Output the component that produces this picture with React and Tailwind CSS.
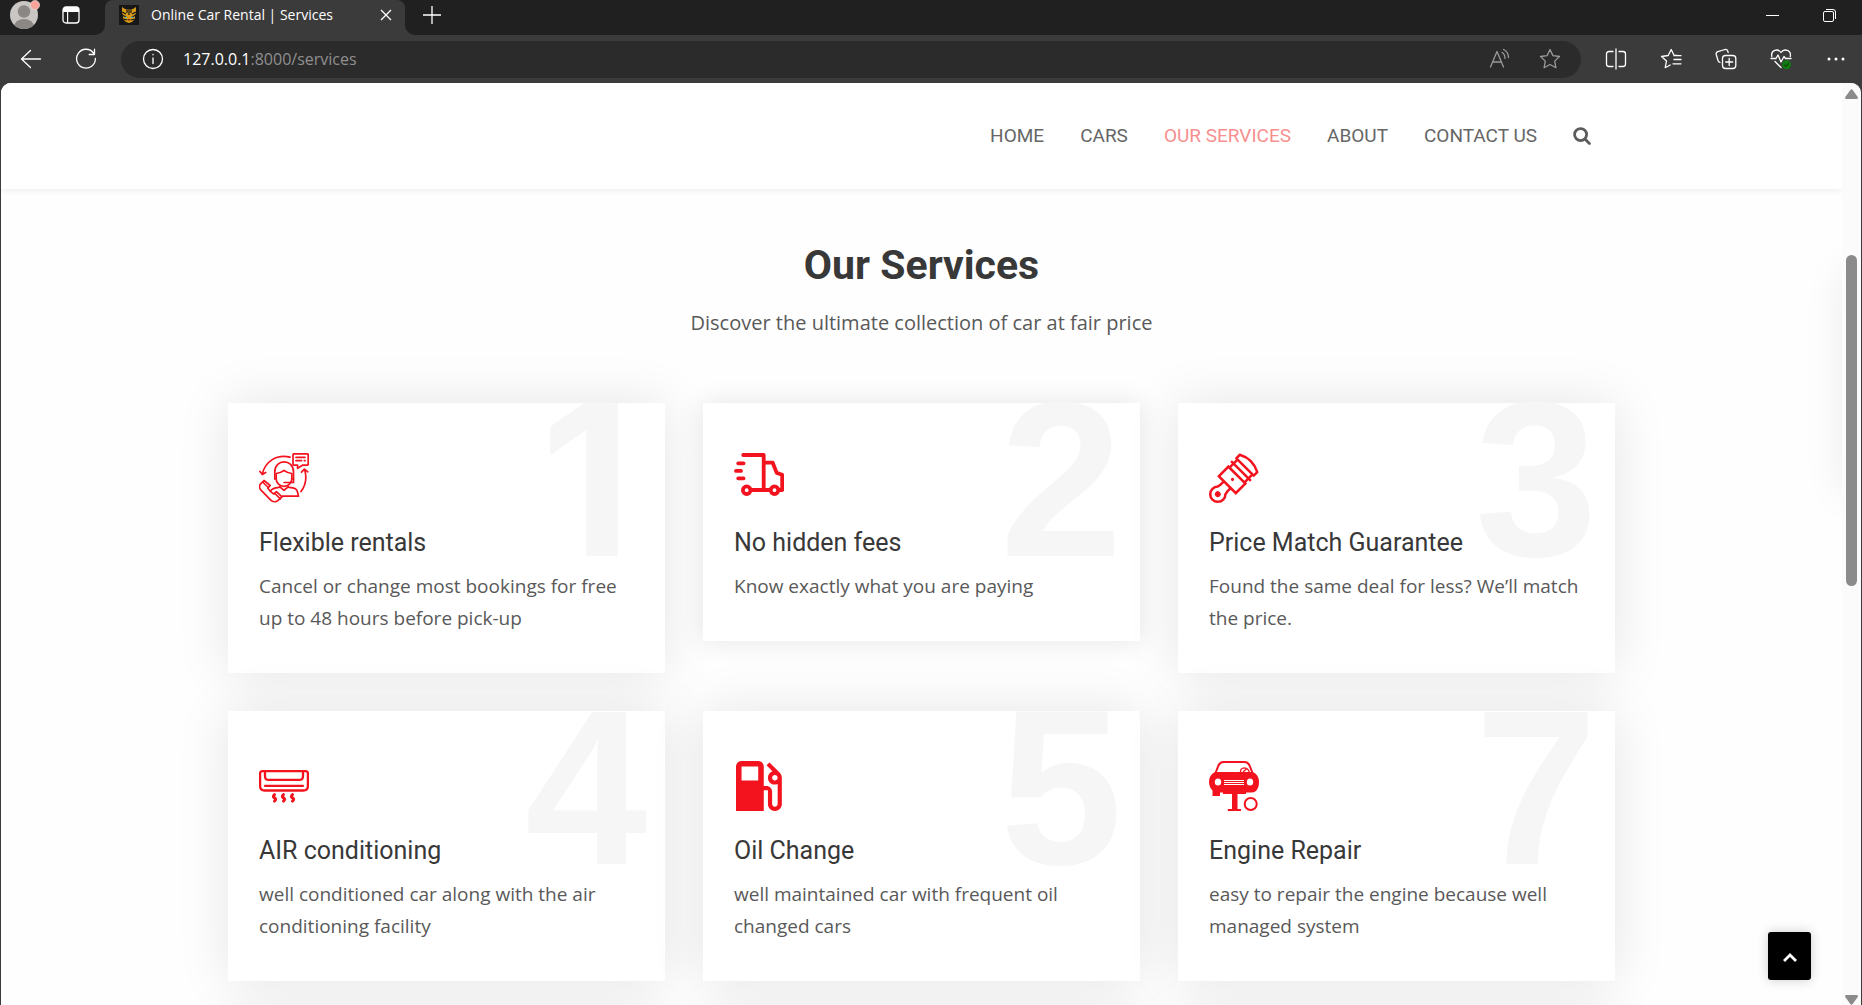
import React from "react";

const RED = "#f3131f";

function AgentIcon() {
  return (
    <svg viewBox="0 0 50 50" className="size-[50px]" fill="none" stroke={RED} strokeWidth="1.700" strokeLinejoin="round" strokeLinecap="round" aria-hidden="true">
      <path d="M35 .8h13.2q1 0 1 1v9.4q0 1-1 1h-4.800L38.600 15.400v-3.200H35q-1 0-1-1V1.800q0-1 1-1z" />
      <path d="M37 4.300h9M37 7.600h5.500M45.300 7.600h.8" />
      <path d="M31 4.200C17 1 6 9 3.300 21M.8 18.300l2.500 3.200 3.400-2" />
      <path d="M42 38.500c4.500-6 6-14 3.600-22M42.500 19.200l3-3 3.300 2.600" />
      <path d="M17.200 26h-1.400V19c0-13.500 18.700-13.500 18.700 0v7h-1.700" />
      <path d="M17.200 20.500V26c0 4 3.500 7.400 7.800 7.400s7.800-3.400 7.800-7.400v-5.500c-3-.4-5.600-1.400-7.800-3.200-2.200 1.800-4.800 2.800-7.800 3.200z" />
      <path d="M34.500 26v3.500h-9.300" strokeWidth="1.700" />
      <path d="M20.500 33.500l4.500 3.800 4.500-3.800M20 34.400c-4 .4-7.500 1.200-8.400 3.800M30 34.400c6.500.5 7.700 1.700 8.500 4.600l1 4.200H23.500" />
      <path d="M5 27.500l-3.300 3.300c-1.700 2-1.300 4.500.3 6.300l9.800 10c2 2 5 2.200 7 .5l4.200-3.800-5.600-5.200-2.600 2.500c-2.300-1.400-4.600-3.700-6-6l2.400-2.600z" />
      <path d="M3.600 29l5.700 5.500M15.800 40.500l5.600 5.300" />
    </svg>
  );
}

function TruckIcon() {
  return (
    <svg viewBox="0 0 50 50" className="size-[50px]" fill="none" stroke={RED} strokeWidth="3.800" strokeLinejoin="round" strokeLinecap="round" aria-hidden="true">
      <path d="M9.200 2H29.700V37M30 9.700h8.700l4 10.200 5.500 1.800V37h-3M17.500 37H36" />
      <path d="M4.200 10.300h5.400M2 17.900h5M4.200 25.300h5.400" />
      <circle cx="12.700" cy="37.200" r="3.800" />
      <circle cx="40.500" cy="37.200" r="3.800" />
    </svg>
  );
}

function PistonIcon() {
  return (
    <svg viewBox="0 0 50 50" className="size-[50px] overflow-visible" fill="none" stroke={RED} strokeWidth="2.500" aria-hidden="true">
      <g transform="translate(8.800 41.200) rotate(-45)">
        <path d="M13.500 -4.800H9L5.400 -5.400A7.600 7.600 0 1 0 5.400 5.400L9 4.800H13.500" strokeLinejoin="round" />
        <circle r="2.900" fill={RED} stroke="none" />
        <rect x="13.500" y="-12" width="13.500" height="24" />
        <circle cx="20.800" r="1.600" fill={RED} stroke="none" />
        <path d="M27 -10.500H38.500M27 10.500H38.500M32.800 -14V14" />
        <path d="M38.500 -12.300H43.500Q50 0 43.500 12.300H38.500z" strokeLinejoin="round" />
      </g>
    </svg>
  );
}

function AirIcon() {
  return (
    <svg viewBox="0 0 50 50" className="size-[50px]" fill="none" stroke={RED} strokeWidth="2.300" strokeLinecap="round" aria-hidden="true">
      <path d="M3.500 10.100h43q2.400 0 2.400 2.400v12.500q0 4.500-4.500 4.500H5.600q-4.500 0-4.500-4.500V12.500q0-2.400 2.400-2.400z" />
      <path d="M6 10.500v4.700q0 3.700 3.700 3.700h30.600q3.700 0 3.700-3.700v-4.700M6 24.800h38" />
      <path d="M15.500 33.700q-2.300 1.900 0 3.200t0 3.200M24.500 33.700q-2.300 1.900 0 3.200t0 3.200M33.500 33.700q-2.300 1.900 0 3.200t0 3.200" strokeWidth="3" />
    </svg>
  );
}

function FuelIcon() {
  return (
    <svg viewBox="3.280 3 18 18" className="size-[50px]" fill={RED} aria-hidden="true">
      <path d="M19.770 7.230l.01-.01-3.720-3.720L15 4.560l2.110 2.110c-.94.36-1.610 1.260-1.610 2.330 0 1.380 1.120 2.500 2.500 2.500.36 0 .69-.08 1-.21v7.210c0 .55-.45 1-1 1s-1-.45-1-1V14c0-1.100-.9-2-2-2h-1V5c0-1.100-.9-2-2-2H6c-1.100 0-2 .9-2 2v16h10v-7.500h1.500v5c0 1.380 1.120 2.500 2.500 2.500s2.500-1.120 2.500-2.500V9c0-.69-.28-1.320-.73-1.770zM12 10H6V5h6v5zm6 0c-.55 0-1-.45-1-1s.45-1 1-1 1 .45 1 1-.45 1-1 1z" />
    </svg>
  );
}

function RepairIcon() {
  return (
    <svg viewBox="0 0 50 50" className="size-[50px]" aria-hidden="true">
      <path d="M6.500 12L9.500 4.500Q11 1 14.500 1h21Q39 1 40.500 4.500L43.500 12" fill="none" stroke={RED} strokeWidth="2" />
      <path d="M31.500 12q-.5-5 4-5.200 4 .2 5 5.200M34 11l4-3.500" fill="none" stroke={RED} strokeWidth="1.300" />
      <path d="M6 11h38q6 3 6 10 0 6-3 9-2 1.500-5 1.500h-5V33H14v-1.500h-3V35H3.500v-5.500Q0 26 0 21q0-7 6-10z" fill={RED} />
      <ellipse cx="9" cy="21" rx="3.200" ry="3.600" fill="white" />
      <ellipse cx="41" cy="21" rx="3.200" ry="3.600" fill="white" />
      <path d="M15 19.500h20M15 23.500h20" stroke="white" strokeWidth="1" />
      <path d="M15 21.500h20" stroke="white" strokeWidth="1" />
      <path d="M23 32h5.500v16H32v2H18.800v-2H23z" fill={RED} />
      <circle cx="41.700" cy="43" r="6" fill="none" stroke={RED} strokeWidth="2" />
    </svg>
  );
}

const services = [
  { n: 1, title: "Flexible rentals", text: "Cancel or change most bookings for free up to 48 hours before pick-up", Icon: AgentIcon },
  { n: 2, title: "No hidden fees", text: "Know exactly what you are paying", Icon: TruckIcon, compact: true },
  { n: 3, title: "Price Match Guarantee", text: "Found the same deal for less? We’ll match the price.", Icon: PistonIcon },
  { n: 4, title: "AIR conditioning", text: "well conditioned car along with the air conditioning facility", Icon: AirIcon },
  { n: 5, title: "Oil Change", text: "well maintained car with frequent oil changed cars", Icon: FuelIcon },
  { n: 7, title: "Engine Repair", text: "easy to repair the engine because well managed system", Icon: RepairIcon },
];

function ServiceCard({ n, title, text, Icon, compact }) {
  return (
    <article className={`relative bg-white px-[31px] pt-[50px] pb-[39px] ${compact ? "shadow-[0_0_25px_rgba(0,0,0,0.1)]" : "shadow-[0_0_50px_rgba(0,0,0,0.1)]"}`}>
      <span
        className={`absolute top-0 right-[18px] w-[122px] text-center leading-[154px] font-bold text-[#f6f6f6] ${n === 1 ? "font-[Inter,sans-serif] text-[210px]" : "font-['Liberation_Sans',Arial,sans-serif] text-[220px]"}`}
        aria-hidden="true"
      >
        {n}
      </span>
      <div className="relative">
        <Icon />
        <h2 className="mt-[24px] font-[Roboto,sans-serif] text-[25px] leading-[32px] text-[#383838]">{title}</h2>
        <p className="mt-[11px] text-[19px] leading-[32px] text-[#595959]">{text}</p>
      </div>
    </article>
  );
}

function ChromeButton({ label, className = "", children }) {
  return (
    <button type="button" aria-label={label} className={`flex h-8 shrink-0 items-center justify-center ${className}`}>
      {children}
    </button>
  );
}

function Line({ children }) {
  return (
    <svg viewBox="0 0 22 22" className="size-[22px]" fill="none" stroke="currentColor" strokeWidth="1.300" strokeLinecap="round" strokeLinejoin="round" aria-hidden="true">
      {children}
    </svg>
  );
}

function TitleBar() {
  return (
    <div className="flex h-[35px] shrink-0 items-stretch bg-[#3b3b3b] text-white">
      <div className="flex w-[105px] items-start rounded-br-[10px] bg-[#202020] pl-[9px]">
        <button type="button" aria-label="Profile" className="size-[31px]">
          <svg viewBox="0 0 31 31" aria-hidden="true">
            <defs><clipPath id="avatar"><circle cx="15" cy="15" r="14" /></clipPath></defs>
            <circle cx="15" cy="15" r="14" fill="#c9c6c3" />
            <g clipPath="url(#avatar)" fill="#8b8784">
              <circle cx="15" cy="11.500" r="6.200" />
              <ellipse cx="15" cy="27" rx="10" ry="8" />
            </g>
            <circle cx="26" cy="5" r="4.600" fill="#f9a39b" stroke="#e9e4e0" strokeWidth="0.600" />
          </svg>
        </button>
        <button type="button" aria-label="Tab actions" className="mt-[5px] ml-[21px] size-[20px]">
          <svg viewBox="0 0 20 20" aria-hidden="true">
            <rect x="2" y="2" width="16" height="16" rx="3" fill="none" stroke="white" strokeWidth="1.300" />
            <path d="M2 7V4.500Q2 2 4.500 2h11Q18 2 18 4.500V7zM6 7h1.200v11H6z" fill="white" />
          </svg>
        </button>
      </div>
      <div className="bg-[#202020]">
        <div className="flex h-full w-[300px] items-center rounded-t-[8px] bg-[#3b3b3b] pb-[5px] pl-[14px]">
          <svg viewBox="0 0 20 20" className="size-[20px]" aria-hidden="true">
            <rect width="20" height="20" fill="#171717" />
            <path d="M3 2l3 2h8l3-2v6l-1 2v4l-3 3-3 1-3-1-3-3v-4L3 8z" fill="#d99a18" />
            <path d="M8 2v6M12 2v6M10 3v7M3 7l4 2M17 7l-4 2M3 10l4 2M17 10l-4 2M4 14l4 1M16 14l-4 1" stroke="#171717" strokeWidth="1.200" />
            <path d="M6 12l2 .7M14 12l-2 .7" stroke="#36b7d4" strokeWidth="1.200" />
            <path d="M8 14h4l-2 2z" fill="#7c2b14" />
          </svg>
          <span className="ml-[12px] grow truncate font-['Open_Sans',sans-serif] text-[14px] leading-5">Online Car Rental | Services</span>
          <button type="button" aria-label="Close tab" className="mr-[13px] size-[12px]">
            <svg viewBox="0 0 12 12" stroke="white" strokeWidth="1.300" aria-hidden="true"><path d="M1 1l10 10M11 1L1 11" /></svg>
          </button>
        </div>
      </div>
      <div className="flex grow items-center justify-between rounded-bl-[10px] bg-[#202020] pb-[5px] pl-[18px]">
        <button type="button" aria-label="New tab" className="size-[18px]">
          <svg viewBox="0 0 18 18" stroke="white" strokeWidth="1.300" aria-hidden="true"><path d="M9 0v18M0 9h18" /></svg>
        </button>
        <div className="flex gap-[44px] pr-[26px]">
          <button type="button" aria-label="Minimize" className="size-[13px]">
            <svg viewBox="0 0 13 13" stroke="white" aria-hidden="true"><path d="M0 6.500h13" /></svg>
          </button>
          <button type="button" aria-label="Restore" className="size-[13px]">
            <svg viewBox="0 0 13 13" fill="none" stroke="white" aria-hidden="true"><rect x=".5" y="2.500" width="10" height="10" rx="1.500" /><path d="M3 .5h7q2.500 0 2.500 2.500v7" /></svg>
          </button>
        </div>
      </div>
    </div>
  );
}

function Toolbar() {
  return (
    <div className="flex h-[48px] shrink-0 items-center bg-[#3b3b3b] pr-[15px] pl-[20px] text-white">
      <ChromeButton label="Back"><Line><path d="M20.500 11H1.500M10.500 2.500L1.500 11l9 8.500" /></Line></ChromeButton>
      <ChromeButton label="Refresh" className="ml-[33px]"><Line><path d="M18.500 5A9.400 9.400 0 1 0 20.400 10.500M19.500 1.200v5.300h-5.300" /></Line></ChromeButton>
      <div className="ml-[24px] flex h-[37px] grow items-center rounded-full bg-[#2b2b2b] pr-[20px] pl-[21px]">
        <ChromeButton label="Site information"><Line><circle cx="11" cy="11" r="9.500" /><path d="M11 10v5.500M11 6.500v.3" /></Line></ChromeButton>
        <a href="#services" className="ml-[19px] grow font-['Open_Sans',sans-serif] text-[16px] leading-6 text-[#8f8f8f]"><span className="text-white">127.0.0.1</span>:8000/services</a>
        <div className="flex gap-[28px] text-[#9a9a9a]">
          <ChromeButton label="Read aloud"><Line><path d="M1.500 19L8 3.500 14.500 19M4 14h8M13 4.500q3 1.500 3 6M14.500 1.500q5 2.500 5 8" /></Line></ChromeButton>
          <ChromeButton label="Add to favorites"><Line><path d="M11 1.500l2.900 6.100 6.600.9-4.800 4.600 1.200 6.600-5.900-3.200-5.900 3.200 1.200-6.600L1.500 8.500l6.600-.9z" /></Line></ChromeButton>
        </div>
      </div>
      <div className="ml-[24px] flex gap-[33px]">
        <ChromeButton label="Split screen"><Line><path d="M8 3.500H4q-2.500 0-2.500 2.500v10Q1.500 18.500 4 18.500h4M14 3.500h4q2.500 0 2.500 2.500v10q0 2.500-2.500 2.500h-4M11 1v20" /></Line></ChromeButton>
        <ChromeButton label="Favorites"><Line><path d="M19 7.700l-5-.5L11.200 1.500 8.200 7.500 1.500 8.500l5 4.600-1.300 6.600 5-2.700M14 11.500h7M14 7.700h7M13 15.800h8" /></Line></ChromeButton>
        <ChromeButton label="Collections"><Line><rect x="7.500" y="7.500" width="13.300" height="13" rx="3" /><path d="M14.200 10.500v7M10.700 14h7M5 14.500q-1.500-.5-2-2L1.200 6.500Q.8 4.500 2.800 3.700L10 1.500q2-.4 2.700 1.500l.5 1.500" /></Line></ChromeButton>
        <ChromeButton label="Browser essentials"><Line><path d="M1.800 8.500C.5 2 8 0 11 4.500 14 0 21.500 2 20.300 8.500M1 10.500h5l2-3.500 3 7 3-5.500 1.500 2H21M5 13.500l6 6" /><circle cx="16.500" cy="16.800" r="4.500" fill="#0f7b10" stroke="none" /><path d="M14.500 17l1.300 1.200 2.700-2.700" stroke="#0a4d0a" /></Line></ChromeButton>
        <ChromeButton label="Settings and more"><Line><g fill="currentColor" stroke="none"><circle cx="4" cy="11" r="1.500" /><circle cx="11" cy="11" r="1.500" /><circle cx="18" cy="11" r="1.500" /></g></Line></ChromeButton>
      </div>
    </div>
  );
}

const links = ["HOME", "CARS", "OUR SERVICES", "ABOUT", "CONTACT US"];

export default function App() {
  return (
    <div className="flex h-screen flex-col overflow-hidden bg-[#3b3b3b] font-['Open_Sans',sans-serif]">
      <TitleBar />
      <Toolbar />
      <div className="mx-px flex min-h-0 grow overflow-hidden rounded-t-[10px] bg-white">
        <div className="relative min-w-0 grow overflow-hidden bg-[#fefefe]">
          <header className="relative z-10 h-[106px] bg-white shadow-[0_0_8px_rgba(0,0,0,0.1)]">
            <nav className="mx-auto flex h-full w-[76%] max-w-[1387px] items-center justify-end gap-[36px] pr-[24px] font-[Roboto,sans-serif] text-[19px] leading-6 text-[#666666]">
              {links.map((l) => (
                <a key={l} href="#services" className={`whitespace-nowrap ${l === "OUR SERVICES" ? "text-[#f78f8f]" : ""}`}>{l}</a>
              ))}
              <button type="button" aria-label="Search" className="size-[18px]">
                <svg viewBox="0 0 18 18" fill="none" stroke="#5c5c5c" strokeWidth="2.800" strokeLinecap="round" aria-hidden="true"><circle cx="7.600" cy="7.600" r="6" /><path d="M12.200 12.200l4.200 4.200" /></svg>
              </button>
            </nav>
          </header>
          <main id="services" className="mx-auto w-[76%] max-w-[1387px] pt-[51px]">
            <div className="text-center">
              <h1 className="font-[Roboto,sans-serif] text-[41px] leading-[50px] font-bold text-[#383838]">Our Services</h1>
              <p className="mt-[17px] text-[20px] leading-[32px] text-[#595959]">Discover the ultimate collection of car at fair price</p>
            </div>
            <div className="mt-[64px] grid grid-cols-3 items-start gap-[38px]">
              {services.map((s) => <ServiceCard key={s.n} {...s} />)}
              {["a", "b", "c"].map((k) => <div key={k} className="h-[270px] bg-white shadow-[0_0_50px_rgba(0,0,0,0.1)]" />)}
            </div>
          </main>
          <div className="absolute top-[190px] -right-[40px] h-[220px] w-[40px] shadow-[0_0_40px_rgba(0,0,0,0.08)]" />
          <button type="button" aria-label="Back to top" className="absolute right-[31px] bottom-[25px] flex h-[48px] w-[43px] items-center justify-center rounded-[3px] bg-black shadow-[0_0_12px_rgba(0,0,0,0.2)]">
            <svg viewBox="0 0 14 9" className="mt-[3px] h-[9px] w-[14px]" fill="none" stroke="white" strokeWidth="2.800" aria-hidden="true"><path d="M1 8l6-6 6 6" /></svg>
          </button>
        </div>
        <div className="flex w-[19px] shrink-0 flex-col items-center bg-[#fbfbfb] pt-[6px]" aria-hidden="true">
          <svg viewBox="0 0 13 10" className="h-[10px] w-[13px] shrink-0" fill="#8b8b8b"><path d="M5.300 1Q6.500-.5 7.700 1l5 7q.8 2-1 2H1.300Q-.5 10 .3 8z" /></svg>
          <div className="mt-[156px] h-[331px] w-[11px] rounded-full bg-[#8b8b8b]" />
          <svg viewBox="0 0 13 10" className="mt-auto h-[10px] w-[13px] shrink-0" fill="#8b8b8b"><path d="M5.300 9Q6.500 10.500 7.700 9l5-7q.8-2-1-2H1.300Q-.5 0 .3 2z" /></svg>
        </div>
      </div>
    </div>
  );
}
